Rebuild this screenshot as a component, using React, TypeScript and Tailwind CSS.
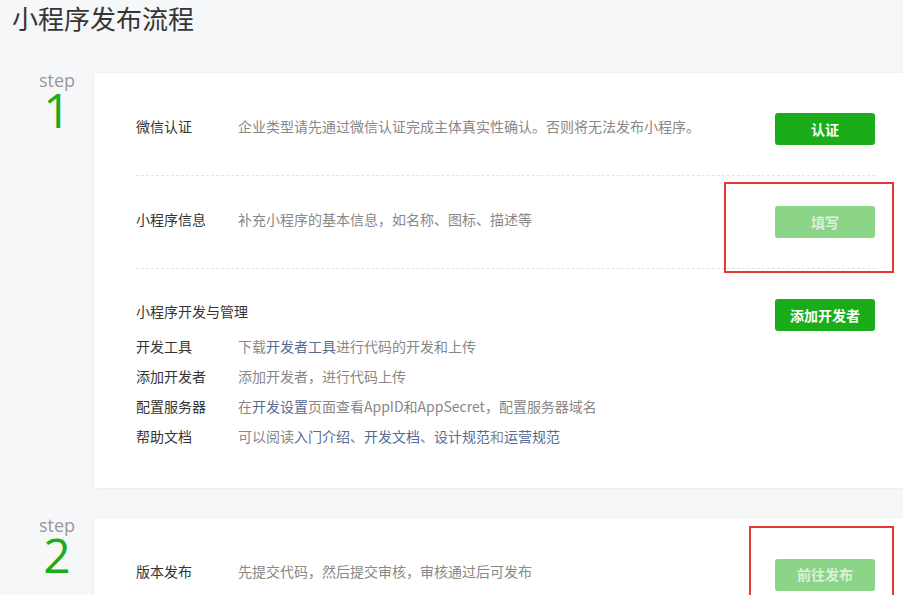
import React from 'react';

const FONT = { fontFamily: '"Noto Sans CJK SC", "Liberation Sans", sans-serif' };

function Btn({ text, disabled }: { text: string; disabled?: boolean }) {
  return (
    <button
      className={
        disabled
          ? 'w-[100px] h-[32px] rounded-[3px] bg-[#8bd488] text-[14px] text-white/70 font-bold shrink-0'
          : 'w-[100px] h-[32px] rounded-[3px] bg-[#1aad19] text-[14px] text-white font-bold shrink-0'
      }
    >
      {text}
    </button>
  );
}

function StepLabel({ n }: { n: string }) {
  return (
    <div className="w-[94px] pl-[20px] shrink-0 flex flex-col items-center">
      <div className="text-[18px] leading-[18px] text-[#9a9a9a] -mt-[2px]" style={{ fontFamily: '"Open Sans", sans-serif' }}>
        step
      </div>
      <div className="text-[48px] leading-[42px] text-[#1aad19]" style={{ fontFamily: '"Open Sans", sans-serif' }}>
        {n}
      </div>
    </div>
  );
}

function Row({
  label,
  desc,
  btn,
  disabled,
  last,
}: {
  label: string;
  desc: React.ReactNode;
  btn: string;
  disabled?: boolean;
  last?: boolean;
}) {
  return (
    <div
      className={
        last
          ? 'h-[93px] flex items-center'
          : 'h-[93px] flex items-center border-b border-dashed border-[#e4e4e8]'
      }
    >
      <div className="w-[102px] mb-[6px] text-[14px] text-[#353535] shrink-0">{label}</div>
      <div className="flex-1 mb-[6px] text-[14px] text-[#888]">{desc}</div>
      <Btn text={btn} disabled={disabled} />
    </div>
  );
}

const Link = ({ children }: { children: React.ReactNode }) => (
  <span className="text-[#576b95]">{children}</span>
);

export default function App() {
  const devRows: [string, React.ReactNode][] = [
    ['开发工具', <>下载<Link>开发者工具</Link>进行代码的开发和上传</>],
    ['添加开发者', <>添加开发者，进行代码上传</>],
    ['配置服务器', <>在<Link>开发设置</Link>页面查看AppID和AppSecret，配置服务器域名</>],
    ['帮助文档', <>可以阅读<Link>入门介绍</Link>、<Link>开发文档</Link>、<Link>设计规范</Link>和<Link>运营规范</Link></>],
  ];

  return (
    <div className="relative w-[903px] h-[595px] overflow-hidden bg-[#f6f7f9]" style={FONT}>

      {/* TITLE */}
      <div className="h-[73px]">
        <h1 className="pl-[12px] text-[26px] leading-[36px] text-[#353535]">
          小程序发布流程
        </h1>
      </div>

      {/* STEP 1 */}
      <div className="flex">
        <StepLabel n="1" />
        <div className="flex-1 -mr-[30px] bg-white rounded-[2px] shadow-[0_0_3px_rgba(0,0,0,0.08)]">
          <div className="ml-[42px] w-[739px] pt-[10px] pb-[37px]">
            <Row
              label="微信认证"
              desc="企业类型请先通过微信认证完成主体真实性确认。否则将无法发布小程序。"
              btn="认证"
            />
            <Row
              label="小程序信息"
              desc="补充小程序的基本信息，如名称、图标、描述等"
              btn="填写"
              disabled
            />
            <div className="pt-[30px]">
              <div className="flex justify-between items-start">
                <div className="text-[14px] leading-[24px] text-[#353535]">小程序开发与管理</div>
                <Btn text="添加开发者" />
              </div>
              {devRows.map(([label, desc]) => (
                <div key={label} className="flex h-[30px] items-center">
                  <div className="w-[102px] text-[14px] text-[#353535]">{label}</div>
                  <div className="text-[14px] text-[#888]">{desc}</div>
                </div>
              ))}
            </div>
          </div>
        </div>
      </div>

      {/* STEP 2 */}
      <div className="flex mt-[30px]">
        <StepLabel n="2" />
        <div className="flex-1 -mr-[30px] bg-white rounded-[2px] shadow-[0_0_3px_rgba(0,0,0,0.08)]">
          <div className="ml-[42px] w-[739px] pt-[10px]">
            <Row
              label="版本发布"
              desc="先提交代码，然后提交审核，审核通过后可发布"
              btn="前往发布"
              disabled
              last
            />
          </div>
        </div>
      </div>

      {/* ANNOTATIONS */}
      <div className="absolute left-[724px] top-[182px] w-[170px] h-[91px] border-2 border-[#e53935]" />
      <div className="absolute left-[749px] top-[526px] w-[145px] h-[80px] border-2 border-[#e53935]" />
    </div>
  );
}
